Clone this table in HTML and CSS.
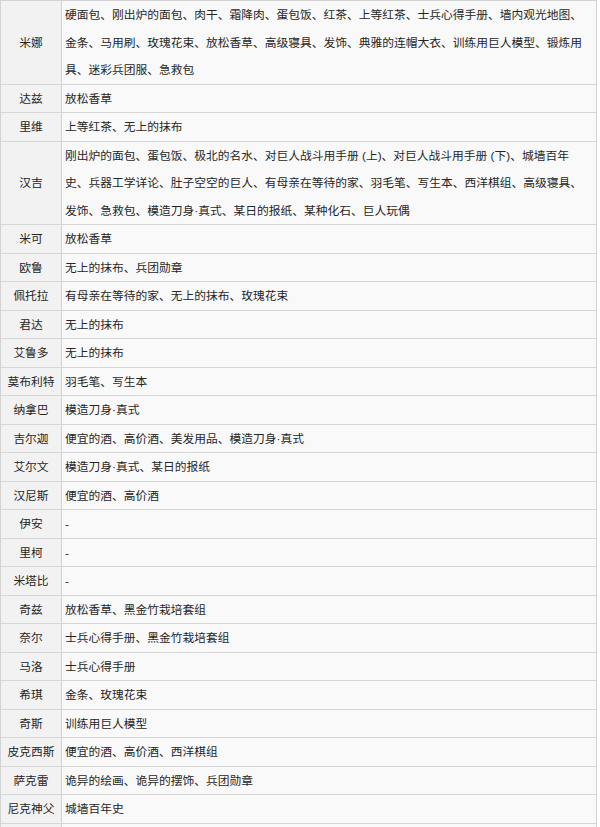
FILE: index.html
```html
<!DOCTYPE html>
<html lang="zh-CN">
<head>
<meta charset="utf-8">
<title>礼物列表</title>
<link rel="stylesheet" href="styles.css">
</head>
<body>
<table class="gift-table">
  <tbody>
    <tr><td class="name">米娜</td><td class="items">硬面包、刚出炉的面包、肉干、霜降肉、蛋包饭、红茶、上等红茶、士兵心得手册、墙内观光地图、金条、马用刷、玫瑰花束、放松香草、高级寝具、发饰、典雅的连帽大衣、训练用巨人模型、锻炼用具、迷彩兵团服、急救包</td></tr>
    <tr><td class="name">达兹</td><td class="items">放松香草</td></tr>
    <tr><td class="name">里维</td><td class="items">上等红茶、无上的抹布</td></tr>
    <tr><td class="name">汉吉</td><td class="items">刚出炉的面包、蛋包饭、极北的名水、对巨人战斗用手册 (上)、对巨人战斗用手册 (下)、城墙百年<br>史、兵器工学详论、肚子空空的巨人、有母亲在等待的家、羽毛笔、写生本、西洋棋组、高级寝具、发饰、急救包、模造刀身·真式、某日的报纸、某种化石、巨人玩偶</td></tr>
    <tr><td class="name">米可</td><td class="items">放松香草</td></tr>
    <tr><td class="name">欧鲁</td><td class="items">无上的抹布、兵团勋章</td></tr>
    <tr><td class="name">佩托拉</td><td class="items">有母亲在等待的家、无上的抹布、玫瑰花束</td></tr>
    <tr><td class="name">君达</td><td class="items">无上的抹布</td></tr>
    <tr><td class="name">艾鲁多</td><td class="items">无上的抹布</td></tr>
    <tr><td class="name">莫布利特</td><td class="items">羽毛笔、写生本</td></tr>
    <tr><td class="name">纳拿巴</td><td class="items">模造刀身·真式</td></tr>
    <tr><td class="name">吉尔迦</td><td class="items">便宜的酒、高价酒、美发用品、模造刀身·真式</td></tr>
    <tr><td class="name">艾尔文</td><td class="items">模造刀身·真式、某日的报纸</td></tr>
    <tr><td class="name">汉尼斯</td><td class="items">便宜的酒、高价酒</td></tr>
    <tr><td class="name">伊安</td><td class="items">-</td></tr>
    <tr><td class="name">里柯</td><td class="items">-</td></tr>
    <tr><td class="name">米塔比</td><td class="items">-</td></tr>
    <tr><td class="name">奇兹</td><td class="items">放松香草、黑金竹栽培套组</td></tr>
    <tr><td class="name">奈尔</td><td class="items">士兵心得手册、黑金竹栽培套组</td></tr>
    <tr><td class="name">马洛</td><td class="items">士兵心得手册</td></tr>
    <tr><td class="name">希琪</td><td class="items">金条、玫瑰花束</td></tr>
    <tr><td class="name">奇斯</td><td class="items">训练用巨人模型</td></tr>
    <tr><td class="name">皮克西斯</td><td class="items">便宜的酒、高价酒、西洋棋组</td></tr>
    <tr><td class="name">萨克雷</td><td class="items">诡异的绘画、诡异的摆饰、兵团勋章</td></tr>
    <tr><td class="name">尼克神父</td><td class="items">城墙百年史</td></tr>
    <tr><td class="name">&nbsp;</td><td class="items">&nbsp;</td></tr>
  </tbody>
</table>
</body>
</html>
```
FILE: styles.css
```css
html, body {
  margin: 0;
  padding: 0;
  background: #ffffff;
}

body {
  font-family: "Liberation Sans", "Noto Sans CJK SC", sans-serif;
  font-size: 11.75px;
  line-height: 27.5px;
  color: #262626;
}

.gift-table {
  border-collapse: separate;
  border-spacing: 0;
  width: 597px;
  table-layout: fixed;
  border-top: 1px solid #d2d2d2;
  border-left: 1px solid #d2d2d2;
}

.gift-table td {
  padding: 0;
  border-right: 1px solid #d2d2d2;
  border-bottom: 1px solid #d6d6d6;
  vertical-align: middle;
}

.gift-table .name {
  width: 60px;
  text-align: center;
  background: #f2f2f2;
  white-space: nowrap;
}

.gift-table .items {
  padding-left: 3px;
  padding-right: 9px;
  background: #f9f9f9;
  text-align: left;
}
```
